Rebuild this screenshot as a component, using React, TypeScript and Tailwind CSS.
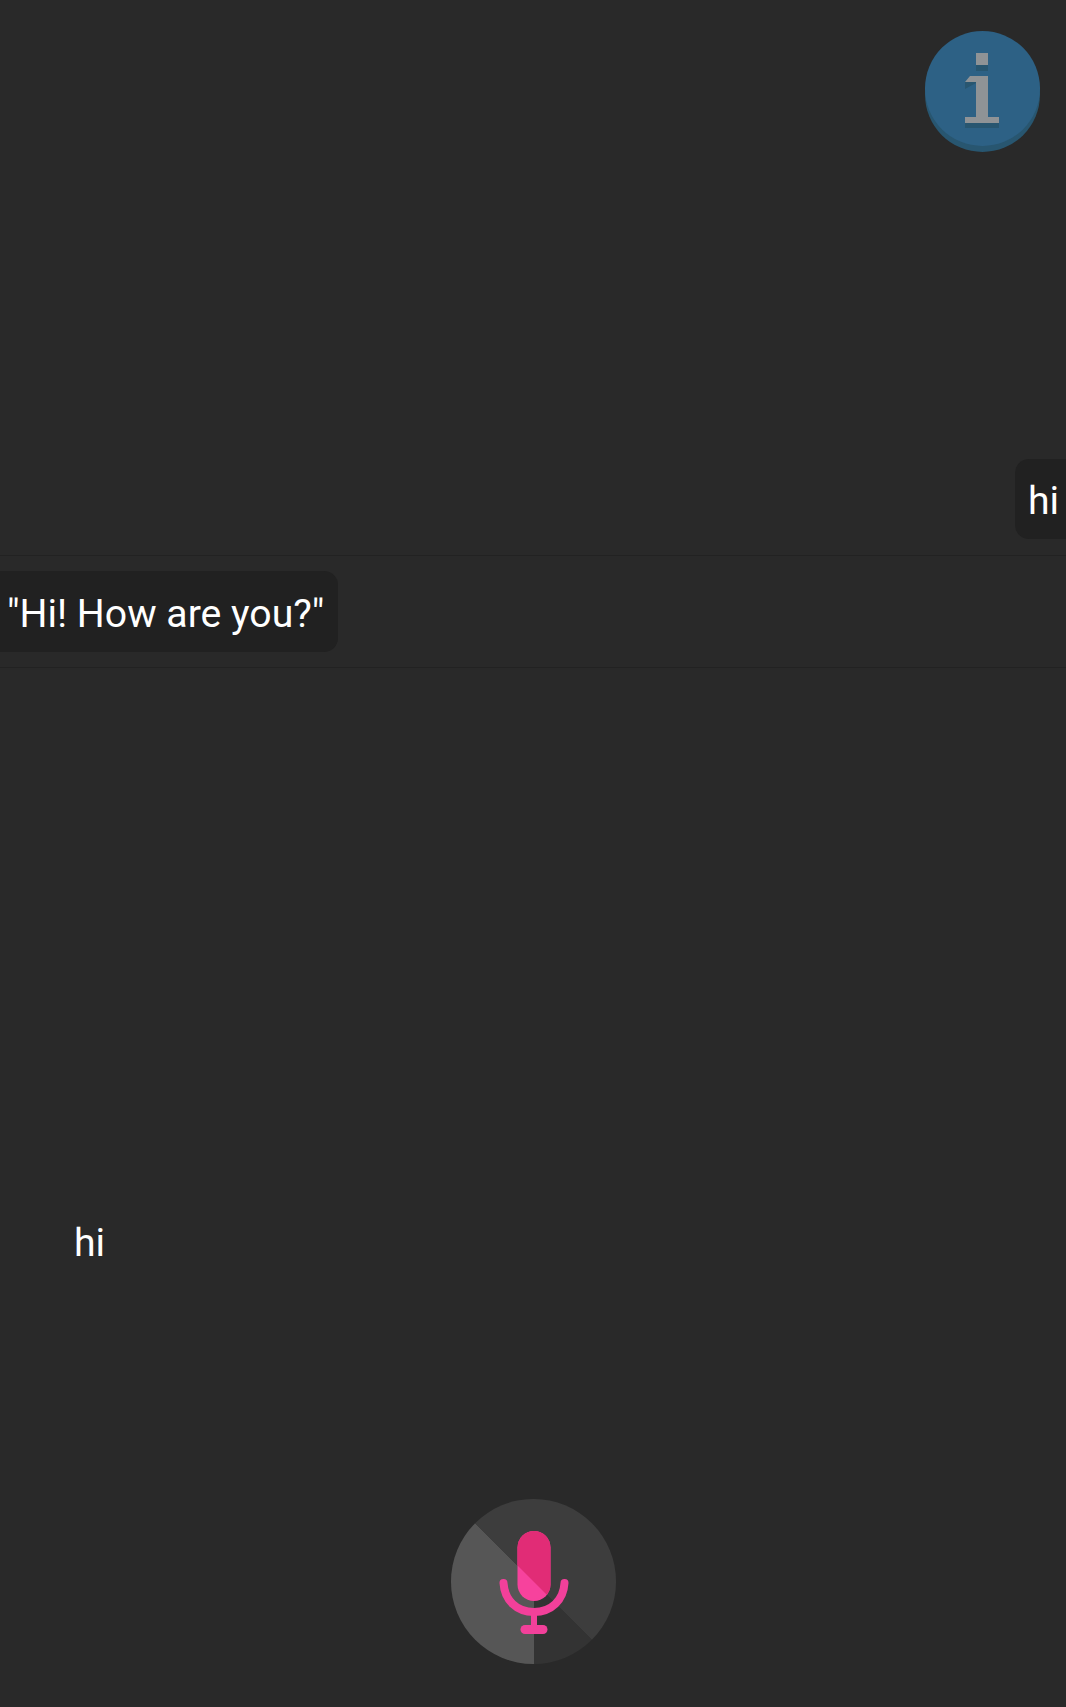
export default function App() {
  return (
    <div className="relative flex h-[1707px] w-full flex-col overflow-hidden bg-[#292929] font-['Roboto',sans-serif] text-[39.2px] leading-[45px] text-white">
      <div className="absolute left-[925px] top-[31px] h-[115px] w-[115px] rounded-full bg-[#2d6185] shadow-[0_6px_0_#285670]">
        <svg width="116" height="121" viewBox="0 0 116 121" className="absolute left-[-1px] top-0">
          <g fill="#285670">
            <rect x="52" y="34" width="12" height="6" />
            <path d="M41 51 L52 45 H64 V92 H75 V97 H41 V92 H52 V52 L41 58 Z" />
          </g>
          <g fill="#8f9396">
            <rect x="52" y="22" width="12" height="12" />
            <path d="M41 51 L46 45 H64 V86 H75 V92 H41 V86 H52 V51 Z" />
          </g>
        </svg>
      </div>

      <div className="flex h-[556px] items-end justify-end border-b border-[#222222] pb-[16px]">
        <div className="rounded-l-[14px] bg-[#212121] pb-[15px] pl-[13px] pr-[7px] pt-[20px]">hi</div>
      </div>

      <div className="flex h-[112px] items-center border-b border-[#222222]">
        <div className="w-[338px] whitespace-nowrap rounded-r-[14px] bg-[#212121] pb-[15px] pl-[7px] pt-[21px]">"Hi! How are you?"</div>
      </div>

      <div className="pl-[74px] pt-[553px]">hi</div>

      <div className="flex justify-center pt-[233px]">
        <div className="h-[165px] w-[165px] rounded-full bg-[conic-gradient(#3d3d3d_0deg_135deg,#333333_135deg_180deg,#565656_180deg_315deg,#3d3d3d_315deg)]">
          <svg width="165" height="165" viewBox="0 0 165 165">
            <defs>
              <clipPath id="upperRight">
                <polygon points="0,0 165,0 165,165" />
              </clipPath>
            </defs>
            <rect x="66.5" y="32" width="33" height="70" rx="16.5" fill="#f7429d" />
            <rect x="66.5" y="32" width="33" height="70" rx="16.5" fill="#e12c76" clipPath="url(#upperRight)" />
            <path d="M52.5 84 C53.5 101 65.5 113 83 113 C100.5 113 112.5 101 113.5 84" fill="none" stroke="#f2409a" strokeWidth="8" strokeLinecap="round" />
            <rect x="80" y="113" width="6" height="17" fill="#f2409a" />
            <rect x="69.5" y="126" width="27" height="9" rx="4.5" fill="#f2409a" />
          </svg>
        </div>
      </div>
    </div>
  );
}
